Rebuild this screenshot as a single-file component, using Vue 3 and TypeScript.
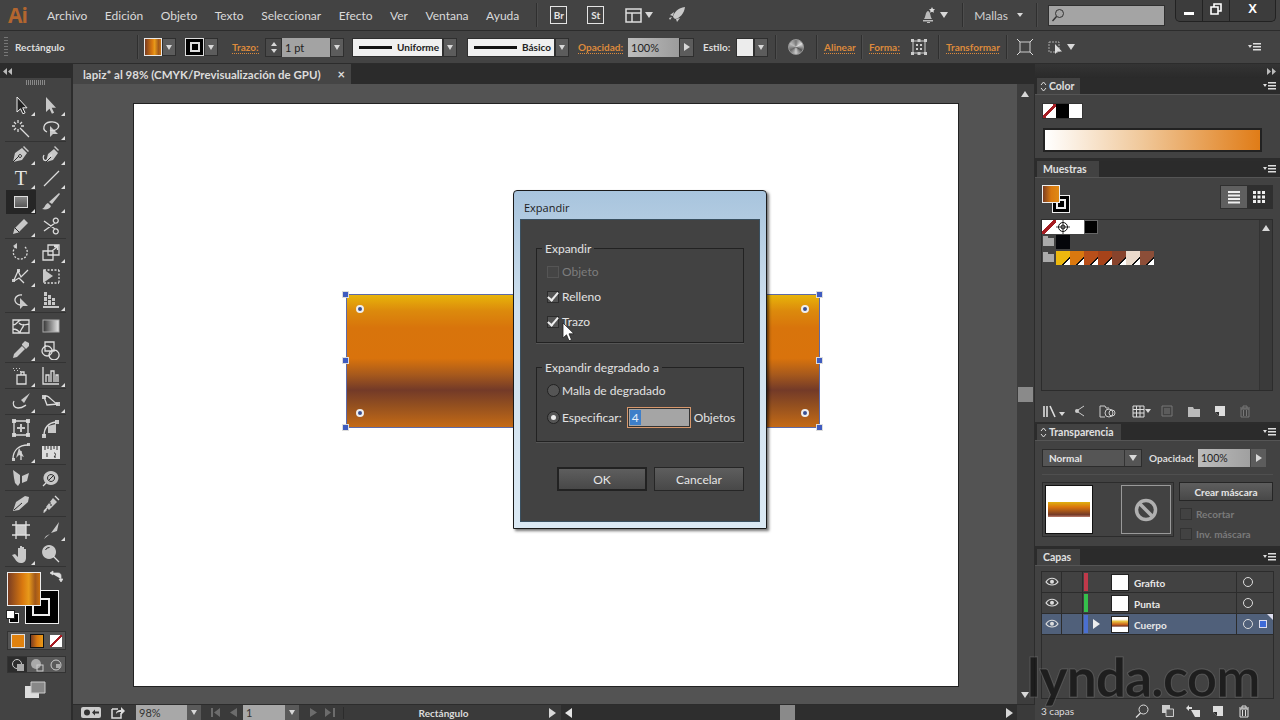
<script setup lang="ts">
interface Tool { s?: string; f?: string; d?: string; t?: string; g?: string; c?: boolean }
type Pair = [Tool, Tool]

const groups: Pair[][] = [
  [
    [{ f: 'M6 2v15l3.500-3.200 2.400 5 2.200-1-2.400-5H16z', c: true, g: 'sel' }, { f: 'M5 2v15l3.500-3.200 2.400 5 2.200-1-2.400-5H15z', c: true }],
    [{ s: 'M9 9l9 9M7 1v3M7 10v3M1 7h3M10 7h3M3 3l2 2M11 3L9 5M3 11l2-2', c: false }, { s: 'M6 13C1 11 2 4 9 3s10 3 8 6-6 3-8 2', f: 'M9 7v11l3-3h5z', c: true }]
  ],
  [
    [{ f: 'M2 18l2-9 7-5 5 5-5 7zM13 2l5 5-1 1-5-5z', d: 'M2 18l6-6M9 10.500a1.500 1.500 0 1 0 .1 0', c: true }, { s: 'M3 11c-2 3 0 7 3 5s2-5 5-5', f: 'M5 18l2-8 6-5 4 4-5 7zM14 2l4 4-1 1-4-4z', d: 'M5 18l5-5', c: true }],
    [{ t: 'T', c: true }, { s: 'M3 18L18 3', c: true }],
    [{ g: 'rect', c: true }, { f: 'M18 1l1 1-8 10-3-2zM7 11l3 3c-1 3-5 4-9 3 3-1 3-5 6-6z', c: true }],
    [{ f: 'M2 18l1.500-5.500L13 3l4 4-9.500 9.500z', d: 'M4 12l4 4', c: true }, { s: 'M3 5l11 8M3 15l11-8M14 13a2.500 2.500 0 1 0 3 3.500 2.500 2.500 0 0 0-3-3.500zM14 7a2.500 2.500 0 1 1 3-3.500A2.500 2.500 0 0 1 14 7z' }]
  ],
  [
    [{ s: 'M14 5a7 7 0 1 1-8-1', g: 'dash', f: 'M6 1v6l-4-3z', c: true }, { s: 'M2 9h10v9H2zM7 3h11v10H7zM11 9l5-4M13 4.500h3.500V8', c: true }],
    [{ s: 'M3 14l4-9 3 6 7-7M3 15l5-3 5 5', f: 'M1 13h3v3H1zM6 3h3v3H6z', c: true }, { s: 'M3 4h15M3 17h15M18 4v13', g: 'dash', f: 'M2 3l10 7-10 7z' }],
    [{ s: 'M11 5a6 5 0 1 0-2 10', f: 'M9 8v11l3-3h5z', c: true }, { f: 'M3 2h3v4H3zM7 5h3v4H7zM3 7h3v4H3zM11 8h3v3h-3zM3 12h3v3H3zM7 10h3v5H7zM11 12h3v3h-3zM2 16h16v2H2z', c: true }]
  ],
  [
    [{ s: 'M2 4h16v13H2zM2 9c4 0 5-5 8-5M8 7c3 3 5 2 10 1M9 17c0-4 3-4 4-9M2 13c3 0 5 1 7 4' }, { g: 'grad' }],
    [{ f: 'M2 18l1-4 8-8 3 3-8 8zM11 4l3-3 4 2 0 3-2 2-1 1-4-4z', c: true }, { s: 'M4 2h9v9H4zM6 6a5 5 0 1 0 .1 0M13 10a5 5 0 1 0 .1 0' }]
  ],
  [
    [{ s: 'M8 9h7v9H6V9zM10 6h3v3h-3z', f: 'M2 2h1v1H2zM5 2h1v1H5zM8 2h1v1H8zM3 4h1v1H3zM6 4h1v1H6zM9 5h1v1H9z', c: true }, { s: 'M2 1v17h16M5 16V9h3v7M10 16V5h3v11M15 16v-7h2v7', c: true }]
  ],
  [
    [{ f: 'M19 1l-9 7 3 3z', s: 'M3 9c-2 3 0 7 4 7s5-1 8-3', c: true }, { s: 'M3 5c5-4 7 5 14 7M3 5l3 8 11-1', f: 'M1 3h4v4H1zM15 10h4v4h-4z', c: true }]
  ],
  [
    [{ s: 'M3 3h14v14H3z', f: 'M1 1h4v4H1zM15 1h4v4h-4zM1 15h4v4H1zM15 15h4v4h-4zM9 6h2v8H9zM6 9h8v2H6z' }, { s: 'M3 18c0-8 4-13 12-14', f: 'M7 8l8-2v9h-8zM1 16h4v4H1zM14 2h4v4h-4z' }],
    [{ s: 'M2 17c0-9 6-14 15-14M10 9v9', f: 'M8 6l5 9-5-2-3 3zM1 16h3v3H1zM16 1h3v3h-3z', c: true }, { f: 'M1 4h18v13H1z', d: 'M4 4v4M7 4v3M10 4v4M13 4v3M16 4v4M6 11v4M13 11c2 0 2 2 0 4h2', g: 'ruler' }]
  ],
  [[{ f: 'M2 2l7 5v8l-2 3-3-3-1-5zM18 5l-7 3v7l5-2 1-4z' }, { s: 'M5 15l-3 3', f: 'M10 3a7.500 7 0 1 1-.1 0z', d: 'M10 6.500a3.500 3.500 0 1 0 .1 0M8 12l5-5' }]],
  [[{ f: 'M2 17l3-9 9-6 4 1-1 5-9 8z', d: 'M3 16l8-7' }, { s: 'M3 17l3-3M14 2l4 4', f: 'M5 13l7-9 4 4-8 8zM2 18l3-3 1 1-3 3z', d: 'M8 9h2M9 11h2' }]],
  [
    [{ s: 'M5 1v18M15 1v18M1 5h18M1 15h18', f: 'M5 5h10v10H5z' }, { f: 'M18 2l-2 9-6 2zM9 14l-6 5 2-3z', c: true }],
    [{ f: 'M4 10l3 3V4h2v6h0V2h2v8V3h2v7V5h2v9c0 3-2 5-5 5s-5-2-6-4l-3-4z', c: true }, { s: 'M12 12l6 6', f: 'M8 1a7 7 0 1 0 .1 0z', d: 'M4.500 6a4 4 0 0 1 4-2.500' }]
  ]
]

const menus = ['Archivo', 'Edición', 'Objeto', 'Texto', 'Seleccionar', 'Efecto', 'Ver', 'Ventana', 'Ayuda']
const swatchesOne = ['none', 'target', '#ffffff', '#000000']
const swatchesThree = ['#ecb80e', '#d9780f', '#b84f1a', '#a6431a', '#87432c', '#eadacb', '#8c4e38']
const layers = [
  { name: 'Grafito', color: '#c0394a', thumb: false, active: false },
  { name: 'Punta', color: '#35c04b', thumb: false, active: false },
  { name: 'Cuerpo', color: '#4a6fd0', thumb: true, active: true }
]
const handles = [
  { x: 0, y: 0 }, { x: 474, y: 0 }, { x: 0, y: 66 }, { x: 474, y: 66 }, { x: 0, y: 133 }, { x: 474, y: 133 }
]
const widgets = [
  { x: 14, y: 14 }, { x: 459, y: 14 }, { x: 14, y: 118 }, { x: 459, y: 118 }
]
</script>

<template>
  <div class="app">
    <svg class="defs" aria-hidden="true">
      <defs>
        <linearGradient id="g-grad" x1="0" x2="1" y1="0" y2="0">
          <stop offset="0" stop-color="#333" /><stop offset="1" stop-color="#e8e8e8" />
        </linearGradient>
        <linearGradient id="g-rect" x1="0" x2="0" y1="0" y2="1">
          <stop offset="0" stop-color="#8a8a8a" /><stop offset="1" stop-color="#555" />
        </linearGradient>
        <symbol id="pm" viewBox="0 0 14 10">
          <path d="M0 3h4L2 6z" fill="#ddd" /><path d="M5 1h8v1.500H5zM5 4h8v1.500H5zM5 7h8v1.500H5z" fill="#ddd" />
        </symbol>
        <symbol id="eye" viewBox="0 0 14 10">
          <path d="M1 5c3-5 9-5 12 0-3 4-9 4-12 0z" fill="none" stroke="#ddd" stroke-width="1.200" />
          <circle cx="7" cy="4.800" r="2" fill="#ddd" />
        </symbol>
        <symbol id="trash" viewBox="0 0 12 13">
          <path d="M1 3h10M4 3V1h4v2M2 4h8v8H2zM4.500 5v6M7.500 5v6" fill="none" stroke="currentColor" />
        </symbol>
        <symbol id="newp" viewBox="0 0 12 12">
          <path d="M1 1h10v10H5L1 7z" fill="currentColor" /><path d="M1 7h4v4z" fill="#2e2e2e" />
        </symbol>
        <symbol id="updown" viewBox="0 0 7 11">
          <path d="M1 4l2.500-3L6 4M1 7l2.500 3L6 7" fill="none" stroke="#ddd" />
        </symbol>
      </defs>
    </svg>

    <header class="menubar">
      <span class="logo">Ai</span>
      <nav class="menus"><span v-for="m in menus" :key="m">{{ m }}</span></nav>
      <i class="vsep sep-a"></i>
      <span class="bridge">Br</span>
      <span class="bridge st">St</span>
      <svg class="arr-icon" width="17" height="17" viewBox="0 0 17 17"><path d="M1 2h15v13H1zM1 6h15M7 6v9" fill="none" stroke="#ddd" stroke-width="1.500" /></svg>
      <i class="tri menu-tri"></i>
      <svg class="rocket" width="18" height="18" viewBox="0 0 18 18"><path d="M17 1C10 2 6 6 5 11l2 2c5-1 9-5 10-12zM2 9l4-3-1 4zM9 16l3-4-4 1zM1 12l3-1-2 3z" fill="#c9c9c9" /></svg>
      <span class="grow"></span>
      <svg class="bell" width="16" height="16" viewBox="0 0 16 16"><path d="M3 12c2-2 1-7 4-8 3 1 2 6 4 8zM2 13h10v1.500H2zM6 15h3v1H6z" fill="#bbb" /><path d="M11 0l1 2 2 .3-1.500 1.500.4 2-1.900-1-1.900 1 .4-2L8 2.300 10 2z" fill="#ddd" /></svg>
      <i class="tri bell-tri"></i>
      <i class="vsep sep-b"></i>
      <span class="mallas">Mallas</span>
      <i class="tri small mallas-tri"></i>
      <i class="vsep sep-c"></i>
      <span class="search">
        <svg width="14" height="14" viewBox="0 0 14 14"><circle cx="8.500" cy="5.500" r="4" fill="none" stroke="#333" /><path d="M5.500 8.500L1.500 13" stroke="#333" stroke-width="1.400" /></svg>
      </span>
      <span class="winbtns">
        <span class="wb wb-min"><i></i></span>
        <span class="wb wb-max"><svg width="12" height="12" viewBox="0 0 12 12"><path d="M4 1h7v7H8V4H4zM1 4h7v7H1z" fill="none" stroke="#fff" stroke-width="1.600" /></svg></span>
        <span class="wb wb-close">X</span>
      </span>
    </header>

    <section class="control">
      <i class="grip"></i>
      <span class="ctl-name">Rectángulo</span>
      <i class="vsep csep-1"></i>
      <span class="fillbox"></span>
      <span class="dd dd-1"><i class="tri"></i></span>
      <span class="strokebox"><i></i></span>
      <span class="dd"><i class="tri"></i></span>
      <span class="link trazo">Trazo:</span>
      <span class="stepper"><i class="tri up"></i><i class="tri"></i></span>
      <span class="field f-pt">1 pt</span>
      <span class="dd dd-f"><i class="tri"></i></span>
      <span class="linebox lb-1"><b></b><em>Uniforme</em></span>
      <span class="dd dd-f"><i class="tri"></i></span>
      <span class="linebox lb-2"><b></b><em>Básico</em></span>
      <span class="dd dd-f"><i class="tri"></i></span>
      <span class="link op">Opacidad:</span>
      <span class="field f-op">100%</span>
      <span class="dd dd-f dd-op"><i class="tri right"></i></span>
      <span class="label estilo">Estilo:</span>
      <span class="stylebox"></span>
      <span class="dd dd-f"><i class="tri"></i></span>
      <i class="vsep csep-2"></i>
      <span class="globe"></span>
      <i class="vsep csep-3"></i>
      <span class="link alinear">Alinear</span>
      <i class="vsep csep-4"></i>
      <span class="link forma">Forma:</span>
      <svg class="forma-ic" width="16" height="16" viewBox="0 0 16 16"><path d="M2 2h12v12H2z" fill="none" stroke="#ccc" /><path d="M0 0h3v3H0zM6.500 0h3v3h-3zM13 0h3v3h-3zM0 13h3v3H0zM6.500 13h3v3h-3zM13 13h3v3h-3zM5 5h2v2H5zM9 5h2v2H9zM5 9h2v2H5zM9 9h2v2H9z" fill="#ccc" /></svg>
      <i class="vsep csep-5"></i>
      <span class="link transf">Transformar</span>
      <i class="vsep csep-6"></i>
      <svg class="tr-1" width="16" height="16" viewBox="0 0 16 16"><path d="M3 3h10v10H3z" fill="none" stroke="#ccc" /><path d="M0 0l3 3M16 0l-3 3M0 16l3-3M16 16l-3-3" stroke="#ddd" /></svg>
      <svg class="tr-2" width="16" height="16" viewBox="0 0 16 16"><path d="M1 3h10v10H1z" fill="none" stroke="#aaa" stroke-dasharray="2 1" /><path d="M7 5v10l2.500-2.500H14z" fill="#ddd" /></svg>
      <i class="tri tr-tri"></i>
      <svg class="ctl-menu" width="14" height="10"><use href="#pm" /></svg>
    </section>

    <main class="main">
      <aside class="tools">
        <div class="tools-top">
          <svg width="10" height="7" viewBox="0 0 10 7"><path d="M4 0v7L0 3.500zM9 0v7L5 3.500z" fill="#bbb" /></svg>
        </div>
        <div class="tools-body">
          <div class="tools-grip"></div>
          <div v-for="(g, gi) in groups" :key="gi" class="tgroup" :class="{ first: gi < 2 }">
            <div v-for="(row, ri) in g" :key="ri" class="trow">
              <span v-for="(t, ti) in row" :key="ti" class="tool" :class="{ active: t.g === 'rect', corner: t.c }">
                <span v-if="t.t" class="t-glyph">{{ t.t }}</span>
                <svg v-else width="20" height="20" viewBox="0 0 20 20">
                  <rect v-if="t.g === 'rect'" x="3.500" y="4.500" width="13" height="11" fill="url(#g-rect)" stroke="#ddd" />
                  <rect v-if="t.g === 'grad'" x="2" y="4" width="16" height="12" fill="url(#g-grad)" stroke="#aaa" />
                  <path v-if="t.f" :d="t.f" :fill="t.g === 'sel' ? '#222' : t.g === 'ruler' ? '#ddd' : '#c8c8c8'" :stroke="t.g === 'sel' ? '#eee' : 'none'" />
                  <path v-if="t.s" :d="t.s" fill="none" stroke="#dcdcdc" stroke-width="1.300" :stroke-dasharray="t.g === 'dash' ? '2 1.500' : undefined" />
                  <path v-if="t.d" :d="t.d" fill="none" stroke="#2a2a2a" />
                </svg>
              </span>
            </div>
          </div>
          <div class="colors">
            <span class="c-stroke"><i></i></span>
            <span class="c-fill"></span>
            <svg class="c-swap" width="14" height="14" viewBox="0 0 14 14"><path d="M2 3h7c2 0 3 1 3 3v3M1 3l3-2v4zM12 12l-2-3h4z" fill="#ddd" stroke="#ddd" stroke-width=".7" /></svg>
            <span class="c-def"><i></i><b></b></span>
          </div>
          <div class="modes">
            <span class="m1"><i></i></span><span class="m2"><i></i></span>
            <span class="m3"></span>
          </div>
          <div class="draws">
            <span class="d-on"><svg width="14" height="14" viewBox="0 0 14 14"><circle cx="6" cy="6" r="4.500" fill="none" stroke="#ccc" /><rect x="6" y="6" width="7" height="7" fill="#aaa" /></svg></span>
            <span><svg width="14" height="14" viewBox="0 0 14 14"><circle cx="6" cy="6" r="5" fill="#aaa" /><rect x="7" y="7" width="6" height="6" fill="none" stroke="#ccc" /></svg></span>
            <span><svg width="14" height="14" viewBox="0 0 14 14"><circle cx="7" cy="7" r="5" fill="none" stroke="#ccc" /><rect x="7" y="6" width="4" height="4" fill="#aaa" /></svg></span>
          </div>
          <div class="screen">
            <svg width="22" height="18" viewBox="0 0 22 18"><path d="M1 5h14v12H1z" fill="#ddd" /><path d="M7 1h14v11H7z" fill="#888" stroke="#ccc" /></svg>
          </div>
        </div>
      </aside>

      <div class="doc">
        <div class="tabbar">
          <div class="tab"><span>lapiz* al 98% (CMYK/Previsualización de GPU)</span><span class="tab-x">×</span></div>
        </div>
        <div class="docbody">
          <div class="canvas">
            <div class="artboard">
              <div class="object">
                <i v-for="(h, i) in handles" :key="i" class="handle" :style="{ left: h.x + 'px', top: h.y + 'px' }"></i>
                <i v-for="(w, i) in widgets" :key="'w' + i" class="widget" :style="{ left: w.x + 'px', top: w.y + 'px' }"></i>
              </div>
            </div>

            <div class="dialog">
              <div class="dlg-title">Expandir</div>
              <div class="dlg-body">
                <div class="fs fs-1">
                  <span class="legend">Expandir</span>
                  <label class="chk off"><i class="box"></i>Objeto</label>
                  <label class="chk"><i class="box on"></i>Relleno</label>
                  <label class="chk"><i class="box on"></i>Trazo</label>
                </div>
                <div class="fs fs-2">
                  <span class="legend">Expandir degradado a</span>
                  <label class="chk rad"><i class="radio"></i>Malla de degradado</label>
                  <div class="chk rad spec">
                    <i class="radio sel"></i>Especificar:
                    <span class="numfield"><mark>4</mark></span>
                    <span>Objetos</span>
                  </div>
                </div>
                <div class="dlg-btns">
                  <button class="btn primary">OK</button>
                  <button class="btn">Cancelar</button>
                </div>
              </div>
              <svg class="cursor" width="14" height="20" viewBox="0 0 14 20"><path d="M1 1v15l3.500-3.200 2.500 6 2.500-1-2.500-6H12z" fill="#fff" stroke="#222" stroke-width=".8" /></svg>
            </div>
          </div>
          <div class="vscroll">
            <i class="tri up sc-up"></i>
            <span class="thumb-v"></span>
            <i class="tri sc-down"></i>
          </div>
        </div>
        <footer class="status">
          <svg class="st-a" width="20" height="11" viewBox="0 0 20 11"><rect x="0" y="0" width="20" height="11" rx="2" fill="#ccc" /><circle cx="6" cy="5.500" r="3" fill="#333" /><path d="M11 5.500l3-3v2h4v2h-4v2z" fill="#333" /></svg>
          <svg class="st-b" width="14" height="13" viewBox="0 0 14 13"><path d="M1 3h6M1 3v9h9V7" fill="none" stroke="#ddd" stroke-width="1.500" /><path d="M5 8c0-3 2-4 5-4V1l4 4-4 4V6c-2 0-4 0-5 2z" fill="#ddd" /></svg>
          <span class="sfield sf-zoom">98%</span>
          <span class="sdd"><i class="tri"></i></span>
          <svg class="nav nav-1" width="10" height="9" viewBox="0 0 10 9"><path d="M0 0h2v9H0zM9 0v9L3 4.500z" fill="#6c6c6c" /></svg>
          <svg class="nav nav-2" width="7" height="9" viewBox="0 0 7 9"><path d="M7 0v9L0 4.500z" fill="#6c6c6c" /></svg>
          <span class="sfield sf-page">1</span>
          <span class="sdd"><i class="tri"></i></span>
          <svg class="nav nav-3" width="7" height="9" viewBox="0 0 7 9"><path d="M0 0v9l7-4.500z" fill="#6c6c6c" /></svg>
          <svg class="nav nav-4" width="10" height="9" viewBox="0 0 10 9"><path d="M0 0v9l6-4.500zM8 0h2v9H8z" fill="#6c6c6c" /></svg>
          <span class="st-name">Rectángulo</span>
          <i class="tri right st-arrow"></i>
          <span class="hscroll">
            <i class="tri left"></i>
            <span class="thumb-h"></span>
            <i class="tri right"></i>
          </span>
        </footer>
      </div>

      <aside class="panels">
        <div class="strip">
          <svg width="10" height="7" viewBox="0 0 10 7"><path d="M0 0v7l4-3.500zM5 0v7l4-3.500z" fill="#bbb" /></svg>
        </div>

        <div class="phead">
          <span class="ptab"><svg class="updown" width="7" height="11"><use href="#updown" /></svg>Color</span>
          <svg class="pm" width="14" height="10"><use href="#pm" /></svg>
        </div>
        <div class="pbody p-color">
          <div class="mini">
            <span class="sw-none"></span><span class="sw-k"></span><span class="sw-w"></span>
          </div>
          <div class="ramp"></div>
        </div>

        <div class="phead">
          <span class="ptab tab-m">Muestras</span>
          <svg class="pm" width="14" height="10"><use href="#pm" /></svg>
        </div>
        <div class="pbody p-swatches">
          <div class="sw-top">
            <div class="sw-fs">
              <span class="sf-stroke"><i></i></span>
              <span class="sf-fill"></span>
            </div>
            <div class="viewbtns">
              <span class="vb on"><svg width="14" height="14" viewBox="0 0 14 14"><path d="M1 1h12v2H1zM1 4.500h12v2H1zM1 8h12v2H1zM1 11.500h12v2H1z" fill="#eee" /></svg></span>
              <span class="vb"><svg width="14" height="14" viewBox="0 0 14 14"><path d="M1 1h3v3H1zM5.500 1h3v3h-3zM10 1h3v3h-3zM1 5.500h3v3H1zM5.500 5.500h3v3h-3zM10 5.500h3v3h-3zM1 10h3v3H1zM5.500 10h3v3h-3zM10 10h3v3h-3z" fill="#eee" /></svg></span>
            </div>
          </div>
          <div class="sw-list">
            <div class="sw-scroll"><i class="tri up"></i></div>
            <div class="sw-row">
              <span v-for="s in swatchesOne" :key="s" class="sw" :class="{ 'sw-none': s === 'none', 'sw-tg': s === 'target', 'sw-b': s === '#000000' }" :style="s.startsWith('#') ? { background: s } : undefined">
                <svg v-if="s === 'target'" width="14" height="14" viewBox="0 0 14 14"><circle cx="7" cy="7" r="4.500" fill="none" stroke="#111" /><circle cx="7" cy="7" r="2" fill="none" stroke="#111" /><path d="M7 0v14M0 7h14" stroke="#111" stroke-width=".8" /></svg>
              </span>
            </div>
            <div class="sw-row">
              <span class="sw folder"><i></i></span>
              <span class="sw" :style="{ background: '#05060a' }"></span>
            </div>
            <div class="sw-row">
              <span class="sw folder"><i></i></span>
              <span v-for="c in swatchesThree" :key="c" class="sw tick" :style="{ background: c }"></span>
            </div>
          </div>
          <div class="sw-foot">
            <svg width="15" height="13" viewBox="0 0 15 13"><path d="M1 1v11M4 1v11M7 1l5 11" stroke="#ddd" stroke-width="1.600" fill="none" /></svg>
            <i class="tri small s-t"></i>
            <svg class="f-b" width="12" height="12" viewBox="0 0 12 12"><circle cx="3" cy="6" r="2" fill="#ccc" /><path d="M4 5l6-4M4 7l6 4" stroke="#ccc" /></svg>
            <svg class="f-c" width="18" height="13" viewBox="0 0 18 13"><path d="M1 12V1h5l1 2h3M1 12h5" fill="none" stroke="#ccc" /><circle cx="10" cy="8" r="4" fill="none" stroke="#ccc" /><circle cx="13" cy="8" r="3" fill="none" stroke="#ccc" /></svg>
            <svg class="f-d" width="13" height="13" viewBox="0 0 13 13"><path d="M1 1h11v11H1zM1 4.500h11M1 8h11M4.500 1v11M8 1v11" stroke="#ddd" fill="none" /></svg>
            <i class="tri small"></i>
            <svg class="f-e dim" width="12" height="12" viewBox="0 0 12 12"><path d="M1 1h10v10H1zM3 4h6M3 6h6M3 8h6" fill="none" stroke="#777" /></svg>
            <svg class="f-f" width="14" height="12" viewBox="0 0 14 12"><path d="M1 2h5l1 2h6v8H1z" fill="#bbb" /></svg>
            <svg class="f-g lt" width="12" height="12"><use href="#newp" /></svg>
            <svg class="f-h dim" width="12" height="13"><use href="#trash" /></svg>
          </div>
        </div>

        <div class="phead">
          <span class="ptab tab-t"><svg class="updown" width="7" height="11"><use href="#updown" /></svg>Transparencia</span>
          <svg class="pm" width="14" height="10"><use href="#pm" /></svg>
        </div>
        <div class="pbody p-trans">
          <div class="tr-row">
            <span class="blend">Normal<i class="blend-dd"><i class="tri"></i></i></span>
            <span class="tr-label">Opacidad:</span>
            <span class="tr-field">100%</span>
            <span class="tr-arrow"><i class="tri right"></i></span>
          </div>
          <div class="tr-main">
            <div class="thumbs">
              <span class="th-a"><i></i></span>
              <span class="th-b">
                <svg width="24" height="24" viewBox="0 0 24 24"><circle cx="12" cy="12" r="9.500" fill="none" stroke="#b0b0b0" stroke-width="3.500" /><path d="M5 5l14 14" stroke="#b0b0b0" stroke-width="3.500" /></svg>
              </span>
            </div>
            <div class="tr-side">
              <button class="btn mask">Crear máscara</button>
              <label class="opt"><i></i>Recortar</label>
              <label class="opt"><i></i>Inv. máscara</label>
            </div>
          </div>
        </div>

        <div class="phead">
          <span class="ptab tab-c">Capas</span>
          <svg class="pm" width="14" height="10"><use href="#pm" /></svg>
        </div>
        <div class="pbody p-layers">
          <div class="lay-list">
            <div v-for="l in layers" :key="l.name" class="lay" :class="{ active: l.active }">
              <span class="l-eye"><svg width="14" height="10"><use href="#eye" /></svg></span>
              <span class="l-lock"></span>
              <span class="l-color" :style="{ background: l.color }"></span>
              <span class="l-exp"><i v-if="l.active" class="tri right"></i></span>
              <span class="l-thumb" :class="{ body: l.thumb }"></span>
              <span class="l-name">{{ l.name }}</span>
              <span class="l-target"><i class="ring"></i><b v-if="l.active"></b></span>
            </div>
          </div>
          <div class="lay-foot">
            <span class="count">3 capas</span>
            <svg class="lf-a" width="14" height="14" viewBox="0 0 14 14"><circle cx="8.500" cy="5.500" r="4.500" fill="none" stroke="#ddd" /><path d="M5.500 9L1 13.500" stroke="#ddd" stroke-width="1.300" /></svg>
            <svg class="lf-b" width="12" height="12" viewBox="0 0 12 12"><path d="M0 0h8v8H0z" fill="#ccc" /><path d="M4 4h7.500v7.500H4z" fill="#555" stroke="#ccc" /></svg>
            <svg class="lf-c" width="14" height="12" viewBox="0 0 14 12"><path d="M0 3l3-3v2h3v2H3v2zM5 5h9v7H9z" fill="#ddd" /></svg>
            <svg class="lf-d lt" width="12" height="12"><use href="#newp" /></svg>
            <svg class="lf-e lt" width="12" height="13"><use href="#trash" /></svg>
          </div>
        </div>
        <div class="watermark"><b>lynda</b>.com</div>
      </aside>
    </main>
  </div>
</template>

<style>
html, body { margin: 0; background: #424242; }
</style>

<style scoped>
.app { position: relative; width: 1280px; height: 720px; overflow: hidden; display: flex; flex-direction: column; background: #424242; font-family: "Lato", "Open Sans", sans-serif; font-size: 11px; color: #dcdcdc; }
.defs { position: absolute; width: 0; height: 0; }
i, em { font-style: normal; }
.grow { flex: 1; }
.vsep { display: block; width: 1px; height: 24px; background: #2f2f2f; box-shadow: 1px 0 0 #4d4d4d; flex: none; }

.tri { display: block; width: 0; height: 0; border-left: 4px solid transparent; border-right: 4px solid transparent; border-top: 6px solid #d8d8d8; flex: none; }
.tri.up { border-top: 0; border-bottom: 6px solid #d8d8d8; }
.tri.right { border: 0 solid transparent; border-top-width: 5px; border-bottom-width: 5px; border-left: 7px solid #d8d8d8; }
.tri.left { border: 0 solid transparent; border-top-width: 5px; border-bottom-width: 5px; border-right: 7px solid #e4e4e4; }
.tri.small { border-left-width: 3px; border-right-width: 3px; border-top-width: 4px; }

/* menu bar */
.menubar { height: 30px; flex: none; display: flex; align-items: center; background: #434343; border-bottom: 1px solid #2c2c2c; position: relative; }
.logo { font-family: "Open Sans", sans-serif; font-weight: 700; font-size: 21px; color: #b3662f; margin-left: 8px; width: 39px; letter-spacing: -1px; }
.menus { display: flex; gap: 17.500px; font-size: 12px; color: #dadada; }
.sep-a { margin-left: 17px; }
.bridge { width: 15px; height: 16px; border: 1px solid #e4e4e4; margin-left: 13px; font-size: 10px; font-weight: 700; display: flex; align-items: center; justify-content: center; color: #e4e4e4; }
.bridge.st { margin-left: 20px; }
.arr-icon { margin-left: 21px; }
.menu-tri { margin-left: 3px; }
.rocket { margin-left: 15px; }
.bell { margin-left: 0; }
.bell-tri { margin-left: 3px; }
.sep-b { margin-left: 14px; }
.mallas { margin-left: 11px; font-size: 12px; color: #cfcfcf; }
.mallas-tri { margin-left: 9px; }
.sep-c { margin-left: 13px; }
.search { margin-left: 11px; width: 117px; height: 21px; box-sizing: border-box; background: #a4a4a4; border: 1px solid #2f2f2f; display: flex; align-items: center; padding-left: 2px; }
.winbtns { align-self: flex-start; margin-left: 10px; margin-right: 4px; width: 101px; height: 22px; box-sizing: border-box; display: flex; border: 1px solid #222; border-top: 0; border-radius: 0 0 5px 5px; background: #3c3c3c; }
.wb { display: flex; align-items: center; justify-content: center; color: #fff; border-right: 1px solid #222; }
.wb-min { width: 26px; }
.wb-min i { width: 10px; height: 3px; background: #fff; margin-top: 6px; }
.wb-max { width: 27px; padding-bottom: 3px; box-sizing: border-box; }
.wb-close { flex: 1; border: 0; font: 700 13px "Liberation Sans", sans-serif; padding-bottom: 4px; }

/* control bar */
.control { height: 32px; flex: none; display: flex; align-items: center; background: #434343; border-bottom: 1px solid #2c2c2c; position: relative; }
.grip { width: 4px; height: 20px; margin-left: 4px; background: repeating-linear-gradient(#777 0 1px, transparent 1px 3px); }
.ctl-name { margin-left: 7px; width: 118px; font-weight: 700; font-size: 10px; color: #dedede; }
.csep-1 { margin-left: 4px; }
.fillbox { margin-left: 6px; width: 18px; height: 18px; border: 1px solid #e8e8e8; box-sizing: border-box; background: linear-gradient(90deg, #7a3d22, #d9780f 45%, #e89a1a 60%, #a0581b 85%, #c9700f); }
.dd { width: 14px; height: 18px; box-sizing: border-box; border: 1px solid #2f2f2f; background: #5c5c5c; display: flex; align-items: center; justify-content: center; margin-right: 9px; }
.dd .tri { border-left-width: 3.500px; border-right-width: 3.500px; border-top-width: 5px; }
.dd .tri.right { border-left-width: 6px; border-right-width: 0; border-top-width: 4px; border-bottom-width: 4px; }
.dd-f { height: 19px; }
.strokebox { width: 19px; height: 18px; box-sizing: border-box; background: #000; border: 1px solid #ddd; display: flex; align-items: center; justify-content: center; }
.strokebox i { width: 6px; height: 6px; border: 2px solid #ddd; }
.link { color: #dd8a3c; border-bottom: 1px dotted #dd8a3c; line-height: 12px; font-size: 10px; font-weight: 700; }
.trazo { margin-left: 5px; width: 27px; }
.stepper { margin-left: 6px; width: 17px; height: 19px; background: #4a4a4a; border: 1px solid #2f2f2f; box-sizing: border-box; display: flex; flex-direction: column; align-items: center; justify-content: space-evenly; }
.stepper .tri { border-left-width: 3.500px; border-right-width: 3.500px; border-top-width: 4px; }
.stepper .tri.up { border-top-width: 0; border-bottom-width: 4px; }
.field { height: 19px; box-sizing: border-box; background: #a3a3a3; color: #222; display: flex; align-items: center; padding-left: 3px; font-size: 11px; }
.f-pt { width: 48px; }
.dd-f { margin-right: 8px; }
.linebox { height: 19px; box-sizing: border-box; background: #f0f0f0; border: 1px solid #2f2f2f; display: flex; align-items: center; color: #222; font-size: 10px; font-weight: 700; }
.linebox b { height: 3px; background: #111; margin-left: 6px; }
.linebox em { margin-left: 5px; }
.lb-1 { width: 91px; }
.lb-1 b { width: 33px; }
.lb-2 { width: 88px; margin-left: 2px; }
.lb-2 b { width: 43px; }
.op { margin-left: 1px; width: 45px; }
.f-op { margin-left: 5px; width: 51px; background: linear-gradient(90deg, #bdbdbd, #9c9c9c); }
.dd-op { width: 15px; margin-right: 9px; }
.label { font-size: 10px; font-weight: 700; color: #dedede; }
.estilo { width: 27px; margin-right: 6px; }
.stylebox { width: 18px; height: 19px; box-sizing: border-box; background: #ececec; border: 1px solid #2f2f2f; }
.csep-2 { margin-left: -1px; }
.globe { margin-left: 12px; width: 14px; height: 14px; border-radius: 50%; background: conic-gradient(#777, #ddd, #555, #ccc, #666, #bbb, #777); border: 1px solid #999; }
.csep-3 { margin-left: 12px; }
.alinear { margin-left: 7px; width: 31px; }
.csep-4 { margin-left: 6px; }
.forma { margin-left: 7px; width: 31px; }
.forma-ic { margin-left: 11px; }
.csep-5 { margin-left: 11px; }
.transf { margin-left: 7px; width: 53px; }
.csep-6 { margin-left: 7px; }
.tr-1 { margin-left: 10px; }
.tr-2 { margin-left: 15px; }
.tr-tri { margin-left: 3px; }
.ctl-menu { margin-left: auto; margin-right: 18px; }

/* main */
.main { flex: 1; display: flex; min-height: 0; position: relative; }
.tools { width: 73px; flex: none; display: flex; flex-direction: column; background: #2c2c2c; }
.tools-top { height: 14px; flex: none; padding-left: 3px; display: flex; align-items: center; }
.tools-body { flex: 1; width: 71px; background: #434343; box-sizing: border-box; }
.tools-grip { height: 15px; width: 19px; margin-left: 26px; background: repeating-linear-gradient(90deg, #888 0 1px, transparent 1px 2px) left 2px / 19px 5px no-repeat; }
.tgroup { border-bottom: 1px solid #333; margin: 0 5px; padding-top: 1px; }
.tgroup.first { padding-top: 0; }
.trow { height: 24px; display: flex; }
.tool { width: 30px; height: 24px; display: flex; align-items: center; justify-content: center; position: relative; margin-left: 1px; }
.tool.corner::after { content: ""; position: absolute; right: 1px; bottom: 1px; border-left: 4px solid transparent; border-bottom: 4px solid #ddd; }
.tool.active { background: #262626; }
.t-glyph { font-family: "Liberation Serif", serif; font-size: 20px; line-height: 24px; color: #e4e4e4; }

.colors { position: relative; height: 60px; margin-top: 4px; }
.c-fill { position: absolute; left: 7px; top: 1px; width: 34px; height: 34px; box-sizing: border-box; border: 1.500px solid #eee; background: linear-gradient(90deg, #7a3d22, #d9780f 45%, #e89a1a 65%, #a0581b 85%, #c9700f); }
.c-stroke { position: absolute; left: 25px; top: 19px; width: 34px; height: 34px; box-sizing: border-box; background: #000; border: 1px solid #eee; display: flex; align-items: center; justify-content: center; }
.c-stroke i { width: 14px; height: 14px; border: 2px solid #eee; margin: 0 0 0 -2px; }
.c-swap { position: absolute; left: 49px; top: -1px; }
.c-def { position: absolute; left: 6px; top: 39px; width: 12px; height: 12px; }
.c-def i { position: absolute; left: 3px; top: 3px; width: 8px; height: 8px; background: #000; border: 1px solid #eee; }
.c-def b { position: absolute; left: 0; top: 0; width: 7px; height: 7px; background: #fff; border: 1px solid #222; }
.modes { display: flex; margin: 0 0 0 7px; width: 59px; height: 19px; background: #555; border: 1px solid #333; box-sizing: border-box; }
.modes span { flex: 1; display: flex; align-items: center; justify-content: center; }
.m1 i { width: 12px; height: 12px; background: #e0820f; border: 1px solid #ddd; }
.m2 i { width: 12px; height: 12px; background: linear-gradient(90deg, #7a3d22, #d9780f, #e89a1a); border: 1px solid #111; }
.m3 { background: linear-gradient(to bottom right, #fff 44%, #a81b22 44% 58%, #fff 58%) center / 12px 12px no-repeat; }
.draws { display: flex; margin: 6px 0 0 7px; width: 59px; height: 17px; background: #5a5a5a; border: 1px solid #333; box-sizing: border-box; }
.draws span { flex: 1; display: flex; align-items: center; justify-content: center; }
.d-on { background: #2c2c2c; }
.screen { margin: 8px 0 0 24px; }

/* doc */
.doc { flex: 1; min-width: 0; display: flex; flex-direction: column; }
.tabbar { height: 20px; flex: none; background: #2b2b2b; display: flex; }
.tab { width: 278px; box-sizing: border-box; background: #454545; padding-left: 10px; display: flex; align-items: center; justify-content: space-between; font-size: 11.500px; font-weight: 700; color: #dcdcdc; }
.tab-x { margin-right: 6px; font-size: 13px; }
.docbody { flex: 1; display: flex; min-height: 0; }
.canvas { flex: 1; position: relative; background: #535353; overflow: hidden; }
.artboard { position: absolute; left: 61px; top: 20px; width: 824px; height: 582px; background: #fff; box-shadow: 0 0 0 1px #222; }
.object { position: absolute; left: 212px; top: 190px; width: 474px; height: 134px; box-sizing: border-box; border: 1px solid #5d6aa8; background: linear-gradient(#e8b40a 0, #dc8a0c 12%, #d8740c 25%, #d9730c 48%, #a85a1c 60%, #733a28 72%, #94501f 84%, #c46a16 100%); }
.handle { position: absolute; width: 5px; height: 5px; margin: -4px 0 0 -5px; background: #3f5cc0; border: 1px solid #ddd; }
.widget { position: absolute; width: 4px; height: 4px; margin: -4px 0 0 -5px; border-radius: 50%; background: #3a4f90; border: 2px solid #eee; }

.dialog { position: absolute; left: 440px; top: 106px; width: 254px; height: 339px; box-sizing: border-box; border: 1px solid #1a1a1a; border-radius: 4px 4px 0 0; padding: 0 6px 6px; background: linear-gradient(#a8c4dd, #cfe0ee 35%, #dbe9f4); box-shadow: 2px 2px 3px rgba(0, 0, 0, .55); display: flex; flex-direction: column; }
.dlg-title { height: 28px; flex: none; color: #1c1c1c; display: flex; align-items: center; padding: 4px 4px 0; box-sizing: border-box; font-family: "Open Sans", sans-serif; font-size: 11px; }
.dlg-body { flex: 1; background: #424242; padding: 28px 15px 0 15px; border: 1px solid #3a5060; font-size: 12px; color: #e2e2e2; }
.fs { position: relative; border: 1px solid #222; box-shadow: 0 1px 0 #555; box-sizing: border-box; width: 208px; }
.fs-1 { height: 95px; padding-top: 10px; }
.fs-2 { height: 75px; margin-top: 24px; padding-top: 9px; }
.legend { position: absolute; left: 5px; top: -8px; background: #424242; padding: 0 3px; line-height: 15px; }
.chk { display: flex; align-items: center; height: 25px; padding-left: 10px; }
.chk.off { color: #7d7d7d; }
.box { width: 10px; height: 10px; margin-right: 3px; border: 1px solid #2c2c2c; background: #545454; position: relative; flex: none; }
.chk.off .box { border-color: #555; background: #454545; }
.box.on::after { content: ""; position: absolute; left: 2px; top: -2px; width: 4px; height: 9px; border: solid #eee; border-width: 0 2px 2px 0; transform: rotate(40deg); }
.rad { height: 27px; }
.radio { width: 11px; height: 11px; border-radius: 50%; border: 1px solid #222; background: #555; margin-right: 2px; flex: none; position: relative; }
.radio.sel::after { content: ""; position: absolute; left: 3px; top: 3px; width: 5px; height: 5px; border-radius: 50%; background: #eee; }
.numfield { width: 64px; height: 21px; box-sizing: border-box; border: 1px solid #d7986c; background: #a5a5a5; margin: 0 3px 0 5px; padding: 2px; box-shadow: inset 0 0 0 1px #333; display: flex; align-items: center; }
.numfield mark { background: #3e7fc9; color: #e8f0fa; padding: 0 2px; line-height: 15px; }
.dlg-btns { display: flex; justify-content: flex-end; gap: 7px; margin-top: 25px; width: 208px; }
.btn { font-family: inherit; font-size: 12px; color: #e6e6e6; border: 1px solid #262626; height: 24px; width: 90px; padding: 0; background: linear-gradient(#5e5e5e, #484848); }
.btn.primary { border: 2px solid #222; }
.cursor { position: absolute; left: 48px; top: 131px; }

.vscroll { width: 17px; flex: none; background: #3d3d3d; position: relative; border-right: 1px solid #2c2c2c; }
.vscroll .tri { position: absolute; left: 4px; }
.sc-up { top: 7px; }
.sc-down { bottom: 6px; }
.thumb-v { position: absolute; left: 1px; top: 303px; width: 15px; height: 15px; background: #8a8a8a; }

.status { flex: none; background: #3a3a3a; border-top: 1px solid #2c2c2c; display: flex; align-items: center; font-size: 10px; box-sizing: border-box; height: 16px; }
.st-a { margin-left: 8px; }
.st-b { margin-left: 10px; }
.sfield { height: 15px; background: #a8a8a8; color: #333; padding-left: 3px; box-sizing: border-box; display: flex; align-items: flex-end; font-size: 11px; line-height: 14px; }
.sf-zoom { width: 51px; margin-left: 11px; }
.sf-page { width: 42px; margin-left: 6px; }
.sdd { width: 14px; height: 15px; background: #5a5a5a; display: flex; align-items: center; justify-content: center; }
.sdd .tri { border-left-width: 3.500px; border-right-width: 3.500px; border-top-width: 5px; }
.nav { flex: none; }
.nav-1 { margin-left: 10px; }
.nav-2 { margin-left: 9px; }
.nav-3 { margin-left: 11px; }
.nav-4 { margin-left: 8px; }
.st-name { margin-left: 8px; width: 200px; text-align: center; font-weight: 700; color: #dcdcdc; border-left: 1px solid #2c2c2c; box-sizing: border-box; }
.st-arrow { margin-left: 6px; }
.hscroll { flex: 1; margin: 0 18px 0 5px; height: 100%; background: #2e2e2e; display: flex; align-items: center; position: relative; padding: 0 4px; justify-content: space-between; }
.thumb-h { position: absolute; left: 219px; top: 0; width: 15px; height: 15px; background: #8a8a8a; }

/* panels */
.panels { width: 245px; flex: none; display: flex; flex-direction: column; position: relative; background: #2c2c2c; }
.strip { height: 14px; flex: none; padding-right: 3px; display: flex; align-items: center; justify-content: flex-end; background: linear-gradient(#343434, #2a2a2a); }
.phead { height: 16px; flex: none; display: flex; align-items: stretch; justify-content: space-between; background: #2b2b2b; position: relative; padding-left: 2px; }
.ptab { background: #424242; padding: 0 6px 0 3px; display: flex; align-items: center; font-size: 10.500px; font-weight: 700; color: #e0e0e0; }
.updown { margin-right: 2px; flex: none; }
.pm { margin: 3px 3px 0 0; }
.pbody { background: #424242; box-sizing: border-box; border-top: 1px solid #555; position: relative; flex: none; }
.p-color { height: 64px; padding: 8px 7px 0; margin-bottom: 3px; }
.mini { display: flex; width: 39px; height: 14px; border: 1px solid #333; }
.mini span { flex: 1; }
.sw-none { background: linear-gradient(to bottom right, #fff 42%, #a51c22 42% 58%, #fff 58%); }
.sw-k { background: #000; }
.sw-w { background: #fff; }
.ramp { margin: 9px 0 0 1px; width: 219px; height: 24px; box-sizing: border-box; border: 2px solid #222; background: linear-gradient(90deg, #fff, #f0c89a 45%, #e07c17); }

.tab-m { padding: 0 12px 0 6px; }
.p-swatches { height: 245px; padding: 7px 7px 0 6px; margin-bottom: 2px; }
.sw-top { display: flex; justify-content: space-between; height: 34px; }
.sw-fs { position: relative; width: 30px; height: 28px; }
.sf-fill { position: absolute; left: 1px; top: 0; width: 18px; height: 18px; box-sizing: border-box; border: 1px solid #eee; background: linear-gradient(90deg, #7a3d22, #d9780f 50%, #e08a14); }
.sf-stroke { position: absolute; left: 11px; top: 10px; width: 18px; height: 18px; box-sizing: border-box; background: #000; border: 1px solid #eee; display: flex; align-items: center; justify-content: center; }
.sf-stroke i { width: 6px; height: 6px; border: 2px solid #eee; }
.viewbtns { display: flex; width: 51px; height: 22px; border: 1px solid #2f2f2f; margin-right: 0; }
.vb { flex: 1; display: flex; align-items: center; justify-content: center; background: #2f2f2f; }
.vb.on { background: #5f5f5f; }
.sw-list { height: 172px; width: 232px; box-sizing: border-box; position: relative; border: 1px solid #2c2c2c; }
.sw-scroll { position: absolute; right: 0; top: 0; bottom: 0; width: 12px; background: #3a3a3a; border-left: 1px solid #333; display: flex; justify-content: center; padding-top: 5px; }
.sw-row { display: flex; margin-bottom: 1px; height: 14px; }
.sw-row:nth-child(4) { margin-top: 2px; }
.sw { width: 14px; height: 14px; box-sizing: border-box; position: relative; display: block; flex: none; }
.sw-tg { background: #fff; }
.sw-b { border: 1px solid #666; }
.tick::after { content: ""; position: absolute; right: 0; bottom: 0; width: 8px; height: 8px; background: linear-gradient(to bottom right, transparent 45%, #111 45% 58%, #fff 58%); }
.folder i { position: absolute; left: 1px; top: 3px; width: 11px; height: 8px; background: #aaa; }
.folder i::before { content: ""; position: absolute; left: 0; top: -2px; width: 5px; height: 2px; background: #aaa; }
.sw-foot { position: absolute; left: 8px; right: 4px; top: 226px; display: flex; align-items: center; height: 14px; }
.s-t { margin: 6px 0 0 1px; }
.f-b { margin-left: 9px; }
.f-c { margin-left: 13px; }
.f-d { margin-left: 15px; }
.f-e { margin-left: 10px; }
.f-f { margin-left: 14px; }
.f-g { margin-left: 13px; }
.f-h { margin-left: 13px; }
.dim { color: #777; }
.lt { color: #ddd; }

.tab-t { padding-right: 7px; }
.p-trans { height: 106px; padding: 7px 7px 0; margin-bottom: 3px; }
.tr-row { display: flex; align-items: center; height: 19px; padding-bottom: 7px; border-bottom: 1px solid #4f4f4f; box-sizing: content-box; }
.blend { width: 100px; height: 18px; box-sizing: border-box; background: #555; border: 1px solid #2c2c2c; display: flex; align-items: center; padding-left: 6px; font-weight: 700; font-size: 10px; position: relative; color: #e6e6e6; }
.blend-dd { position: absolute; right: 0; top: 0; bottom: 0; width: 16px; border-left: 1px solid #333; display: flex; align-items: center; justify-content: center; }
.tr-label { margin-left: 7px; width: 49px; font-weight: 700; font-size: 10px; }
.tr-field { height: 18px; width: 52px; box-sizing: border-box; background: linear-gradient(90deg, #bcbcbc, #a0a0a0); color: #222; padding-left: 3px; display: flex; align-items: center; font-size: 10.500px; }
.tr-arrow { width: 15px; height: 18px; background: #5c5c5c; margin-left: 1px; display: flex; align-items: center; justify-content: center; }
.tr-arrow .tri { border-left-width: 6px; border-top-width: 4px; border-bottom-width: 4px; }
.tr-main { display: flex; padding-top: 7px; }
.thumbs { position: relative; width: 132px; height: 55px; box-sizing: border-box; border: 1px solid #2c2c2c; }
.th-a { position: absolute; left: 2px; top: 2px; width: 48px; height: 49px; background: #fff; border: 1px solid #111; box-sizing: border-box; display: flex; align-items: center; }
.th-a i { display: block; width: 100%; height: 15px; margin: 0 2px; background: linear-gradient(#e0b010, #d9730c 35%, #733a28 85%, #c08070); }
.th-b { position: absolute; left: 78px; top: 2px; width: 50px; height: 49px; box-sizing: border-box; border: 1px solid #999; display: flex; align-items: center; justify-content: center; }
.tr-side { margin-left: 5px; flex: 1; }
.btn.mask { width: 94px; height: 19px; font-size: 10px; font-weight: 700; display: block; }
.opt { display: flex; align-items: center; height: 20px; color: #7a7a7a; font-size: 10px; font-weight: 700; margin-top: 0; }
.opt:first-of-type { margin-top: 3px; }
.opt i { width: 10px; height: 10px; border: 1px solid #333; margin: 0 4px 0 1px; }

.tab-c { padding: 0 9px 0 6px; }
.p-layers { flex: 1; min-height: 0; padding: 5px 6px 0; }
.lay-list { height: 128px; box-sizing: border-box; border: 1px solid #2c2c2c; width: 233px; }
.lay { height: 21px; display: flex; align-items: center; box-sizing: border-box; border-bottom: 1px solid #2c2c2c; position: relative; font-size: 10px; font-weight: 700; color: #e8e8e8; }
.lay.active { background: #50607a; }
.lay.active::after { content: ""; position: absolute; right: 0; top: 0; border-left: 6px solid transparent; border-top: 6px solid #dde; }
.l-eye { width: 19px; display: flex; justify-content: center; height: 100%; align-items: center; border-right: 1px solid #2c2c2c; }
.l-lock { width: 20px; height: 100%; border-right: 1px solid #2c2c2c; }
.l-color { width: 4px; height: 18px; margin-left: 1px; }
.l-exp { width: 23px; display: flex; padding-left: 5px; box-sizing: border-box; }
.l-exp .tri { border-left-color: #eee; }
.l-thumb { width: 18px; height: 17px; margin-top: 1px; background: #fff; border: 1px solid #222; box-sizing: border-box; }
.l-thumb.body { background: linear-gradient(#fff 15%, #e8c040 30%, #c9631a 50%, #7a3b28 60%, #fff 70%); }
.l-name { margin-left: 5px; flex: 1; padding-top: 2px; }
.l-target { width: 36px; height: 100%; border-left: 1px solid #2c2c2c; display: flex; align-items: center; position: relative; }
.ring { width: 8px; height: 8px; border: 1px solid #ddd; border-radius: 50%; margin-left: 6px; }
.l-target b { width: 6px; height: 6px; background: #3f6bd8; border: 1px solid #dde; margin-left: 6px; }
.lay-foot { display: flex; align-items: center; height: 21px; box-sizing: border-box; padding-top: 3px; color: #ddd; position: relative; z-index: 2; }
.count { font-size: 10px; width: 94px; }
.lf-a { margin-left: 0; }
.lf-b { margin-left: 13px; }
.lf-c { margin-left: 12px; }
.lf-d { margin-left: 12px; }
.lf-e { margin-left: 14px; }
.watermark { position: absolute; left: -8px; bottom: 13px; font-family: "Lato", sans-serif; font-size: 53px; line-height: 60px; letter-spacing: -1px; color: rgba(20, 20, 20, .78); -webkit-text-stroke: 1px rgba(200, 200, 200, .22); font-weight: 700; pointer-events: none; z-index: 1; }
.watermark b { font-weight: 900; }
</style>
